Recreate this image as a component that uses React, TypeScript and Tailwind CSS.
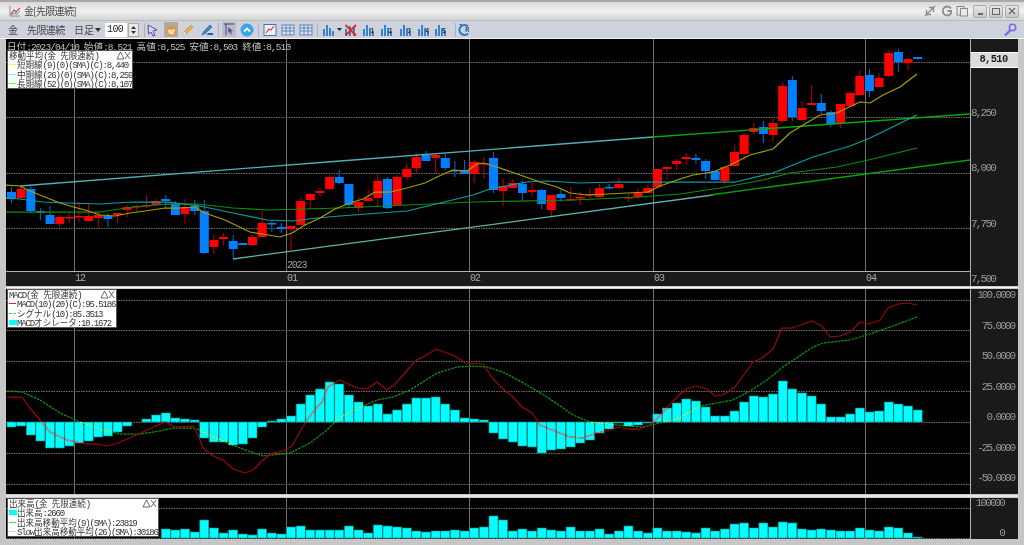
import React from "react";

type C = [number, number, number, number, 0 | 1];
// body top, body bottom, wick top, wick bottom, 0 = blue / 1 = red
const candles: C[] = [
  [192,199,187,203,0],[189,198,187,199,1],[189,211,186,213,0],[211,213,208,220,0],[215,224,206,224,0],[217,224,215,227,1],[217,218,213,223,1],[216,217,202,222,1],[216,221,203,221,1],[215,218,213,229,1],
  [216,219,213,227,0],[213,215,213,223,1],[207,210,205,217,1],[206,207,204,212,1],[205,206,195,208,1],[201,205,199,206,1],[199,201,195,208,0],[203,215,201,215,0],[207,214,199,224,1],[206,211,200,215,0],
  [211,253,200,254,0],[240,247,234,254,1],[237,239,233,245,1],[241,249,235,259,0],[243,245,243,245,0],[237,245,235,245,1],[223,237,211,237,1],[223,224,221,232,0],[227,229,223,233,0],[226,229,226,251,1],
  [201,225,198,225,1],[194,200,193,209,1],[191,193,187,197,1],[177,189,175,190,1],[177,183,170,184,0],[184,205,184,208,0],[202,208,197,212,1],[198,201,190,201,1],[181,198,173,207,1],[179,208,177,209,0],
  [177,205,175,205,1],[169,177,163,179,1],[157,168,153,174,1],[155,161,151,161,0],[155,158,153,173,1],[158,168,153,170,0],[170,171,161,177,0],[170,174,160,174,0],[162,174,160,183,1],[163,164,157,179,1],
  [158,190,152,193,0],[186,191,179,206,1],[183,188,179,189,1],[184,193,180,201,0],[190,192,183,196,1],[190,204,189,209,0],[195,210,195,216,1],[194,198,189,202,0],[199,200,187,200,1],[197,198,192,205,1],
  [194,195,188,199,1],[188,197,184,197,1],[187,188,184,189,0],[184,188,178,189,1],[197,198,194,202,1],[193,197,188,199,1],[188,193,185,193,1],[169,187,169,187,1],[167,169,165,180,1],[161,164,159,170,1],
  [157,159,153,165,1],[158,160,154,164,0],[161,171,159,179,0],[171,180,171,180,0],[167,181,166,185,1],[152,166,145,166,1],[135,154,133,160,1],[128,132,123,134,1],[127,134,121,143,0],[123,135,119,142,1],
  [86,121,82,123,1],[80,117,76,121,0],[108,120,101,121,1],[103,105,85,105,1],[103,111,94,114,0],[112,124,110,127,0],[104,123,104,128,1],[93,106,91,106,1],[76,95,70,95,1],[75,91,69,97,0],
  [78,87,73,87,1],[53,76,50,77,1],[52,62,49,72,0],[59,63,57,71,1],[57,59,57,60,0],
];
const hist = [-5,-4,-13,-19,-26,-26,-24,-21,-19,-15,-14,-10,-4,0,3,7,9,4,3,2,-16,-20,-20,-23,-22,-16,-5,1,3,6,18,27,33,40,38,27,20,16,18,8,12,18,24,24,25,18,12,4,3,2,-11,-17,-20,-24,-25,-31,-28,-27,-25,-21,-18,-11,-7,-1,-4,-3,-1,8,14,19,23,21,15,6,6,11,20,26,25,28,41,33,29,26,18,5,5,8,14,10,11,20,18,16,12];
const vol = [0,0,0,0,0,0,0,0,0,0,0,0,0,0,0,0,9,8,9,6,18,10,5,8,4,3,9,5,4,11,12,8,8,8,8,12,8,5,13,12,11,10,7,6,7,7,8,7,10,11,22,18,7,9,7,10,8,7,11,7,7,9,4,7,12,7,5,10,7,7,6,5,10,7,9,14,15,10,15,11,16,15,9,8,9,8,7,7,10,8,7,11,10,5,1];

const cx = (i: number) => 11.5 + 9.64 * i;

const yellow = "6,185 20,186 30,191 45,197 60,203 70,206 85,210 100,215 115,216 130,213 145,211 165,208 180,208 195,207 205,213 225,220 250,232 262,234 280,237 292,233 305,225 320,218 335,209 350,203 363,199 375,192 390,192 407,188 425,183 437,177 453,170 467,171 477,164 483,163 497,167 520,175 540,182 557,187 570,193 587,195 607,194 627,193 648,192 660,186 680,179 693,175 713,172 730,165 750,155 773,149 790,133 803,125 820,115 837,113 847,108 860,102 870,103 883,95 900,87 917,74";
const teal = "6,198 20,199 43,202 67,203 100,204 133,202 167,202 200,206 233,213 267,220 293,221 317,218 340,216 380,213 407,211 440,203 473,195 490,189 527,182 547,181 580,183 617,182 680,182 735,182 773,173 793,165 813,157 850,146 870,138 917,115";
const green = "6,212 67,212 100,212 133,207 167,204 197,204 233,208 267,210 340,208 407,205 473,202 573,200 640,197 680,194 720,188 763,180 790,173 837,167 877,158 917,148";
const macd = "7,397 22,397 30,408 40,420 50,432 67,440 87,444 97,444 107,446 118,443 132,437 147,430 165,422 175,427 193,426 198,435 203,448 213,456 223,460 233,469 245,473 253,470 263,460 273,453 283,451 292,446 302,428 312,413 322,402 328,387 340,380 350,385 358,388 367,389 377,382 387,390 395,384 405,373 415,361 425,356 436,349 455,356 465,363 483,364 493,379 502,388 513,397 522,407 532,413 540,425 557,432 570,437 583,438 597,433 610,430 618,427 628,429 640,429 652,424 665,410 680,394 687,389 696,386 707,389 715,396 723,395 735,387 753,362 762,358 773,349 782,328 792,328 812,321 822,326 830,337 840,336 850,332 860,322 868,324 880,320 888,308 898,304 908,303 917,305";
const signal = "7,391 22,392 40,400 60,413 80,422 100,429 120,434 140,434 160,431 173,428 195,428 213,437 240,448 263,456 290,453 310,443 327,430 340,417 363,406 377,400 393,397 410,390 437,373 457,367 473,366 487,367 503,372 527,385 547,397 573,415 590,422 607,424 627,426 643,427 660,423 680,418 700,406 733,400 750,391 767,380 783,367 813,347 823,343 850,340 870,334 893,326 917,317";

const vLines = [74, 286, 469, 653, 865];

const cjk = /([\u3000-\u30ff\u4e00-\u9fff\uff00-\uffef]+)/;

function T({ s, big }: { s: string; big?: boolean }) {
  return (
    <>
      {s.split(cjk).map((p, i) =>
        cjk.test(p) ? (
          <span key={i} className={big ? "font-['Noto_Sans_CJK_JP',sans-serif] text-[9.6px]" : "font-['Noto_Sans_CJK_JP',sans-serif] text-[8.54px]"}>{p}</span>
        ) : (
          <span key={i} className={big ? "font-['Liberation_Mono',monospace] text-[9.5px] tracking-[-0.9px]" : "font-['Liberation_Mono',monospace] text-[9px] tracking-[-1.13px]"}>{p}</span>
        )
      )}
    </>
  );
}

function LegendRow({ s, swatch }: { s: string; swatch?: React.ReactNode }) {
  return (
    <div className="flex h-[9.3px] items-center whitespace-nowrap leading-[9.3px] text-[#333]">
      <div className="flex w-[8px] shrink-0 items-center">{swatch}</div>
      <span className="whitespace-nowrap"><T s={s} /></span>
    </div>
  );
}

function Legend({ title, rows, className }: { title: string; rows: React.ReactNode; className: string }) {
  return (
    <div className={`absolute left-[1px] z-10 flex flex-col border border-[#555] bg-white pl-[1px] pr-[1px] ${className}`}>
      <div className="flex h-[9.3px] items-center justify-between leading-[9.3px] text-[#333]">
        <span className="whitespace-nowrap"><T s={title} /></span>
        <svg width="15" height="9" viewBox="0 0 15 9" fill="none" stroke="#444" strokeWidth="0.8" className="shrink-0">
          <path d="M1 8 L4.5 1 L8 8 Z" />
          <path d="M9 1 L14 8 M14 1 L9 8" />
        </svg>
      </div>
      {rows}
    </div>
  );
}

function Grid({ ys, top, bottom }: { ys: number[]; top: number; bottom: number }) {
  return (
    <g>
      {ys.map((y) => (
        <line key={y} x1="6" x2="970" y1={y + 0.5} y2={y + 0.5} stroke="#707070" strokeWidth="1" strokeDasharray="1.5 1" />
      ))}
      {vLines.map((x) => (
        <line key={x} x1={x + 0.5} x2={x + 0.5} y1={top} y2={bottom} stroke="#707070" strokeWidth="1" />
      ))}
    </g>
  );
}

const Line = ({ p, c, w = 1.25, dash, clip }: { p: string; c: string; w?: number; dash?: string; clip?: string }) => (
  <polyline points={p} fill="none" stroke={c} strokeWidth={w} strokeDasharray={dash} clipPath={clip} strokeLinejoin="round" />
);

function MainPlot() {
  return (
    <svg viewBox="6 39 964 232" className="block h-[232px] w-[964px] bg-black">
      <Grid ys={[62, 117, 173, 228]} top={39} bottom={271} />
      <text x="287" y="268" className="fill-[#a0a0a0] text-[10px] font-['Liberation_Mono',monospace] tracking-[-1.2px]">2023</text>
      {candles.map((c, i) => {
        const x = cx(i);
        const red = c[4] === 1;
        return (
          <g key={i}>
            <line x1={x} x2={x} y1={c[2]} y2={c[3]} stroke={red ? "#a80000" : "#0064c0"} strokeWidth="1.1" />
            <rect x={x - 4.5} y={c[0]} width="9" height={Math.max(c[1] - c[0], 1.5)} fill={red ? "#ff0000" : "#0080ff"} />
          </g>
        );
      })}
      <Line p="20,186 340,161 653,137" c="#50b0b0" w={1.3} />
      <Line p="653,137 970,114" c="#0aa80a" w={1.3} />
      <Line p="233,259 713,195" c="#60b0b0" w={1.3} />
      <Line p="710,195 970,160" c="#0aa00a" w={1.3} />
      <Line p={green} c="#0a900a" />
      <Line p={teal} c="#0aa0a0" />
      <Line p={yellow} c="#a89e00" />
    </svg>
  );
}

function MacdPlot() {
  const bars = hist.map((v, i) => (v === 0 ? null : { x: cx(i) - 4.5, y: v > 0 ? 422 - v : 422, h: Math.abs(v) }));
  return (
    <svg viewBox="6 289 964 205" className="block h-[205px] w-[964px] bg-black">
      <defs>
        <clipPath id="barClip">
          {bars.map((b, i) => b && <rect key={i} x={b.x} y={b.y} width="9" height={b.h} />)}
        </clipPath>
      </defs>
      <Grid ys={[300, 330, 361, 391, 422, 453, 484]} top={289} bottom={494} />
      {bars.map((b, i) => b && <rect key={i} x={b.x} y={b.y} width="9" height={b.h} fill="#00ffff" stroke="#008a8a" strokeWidth="0.6" />)}
      <Line p={signal} c="#0a9a0a" dash="2.5 1" />
      <Line p={macd} c="#980808" />
      <Line p={signal} c="#a8ffb0" dash="2.5 1" clip="url(#barClip)" />
      <Line p={macd} c="#c48c8c" clip="url(#barClip)" />
    </svg>
  );
}

function VolPlot() {
  return (
    <svg viewBox="6 498 964 41" className="block h-[41px] w-[964px] bg-black">
      <Grid ys={[508, 538]} top={498} bottom={539} />
      {vol.map((v, i) =>
        v === 0 ? null : <rect key={i} x={cx(i) - 4.5} y={538 - v} width="9" height={v} fill="#00ffff" stroke="#008a8a" strokeWidth="0.6" />
      )}
    </svg>
  );
}

const Sep = ({ ml }: { ml: string }) => <div className={`h-[14px] w-px shrink-0 bg-[#aab0bc] ${ml}`} />;

const Ic = ({ children, className = "" }: { children: React.ReactNode; className?: string }) => (
  <svg viewBox="0 0 14 14" width="14" height="14" className={`shrink-0 ${className}`}>{children}</svg>
);

const Bars = ({ n, ml }: { n?: string; ml: string }) => (
  <Ic className={ml}>
    <rect x="1" y="6" width="2" height="7" fill="#3a7fd0" />
    <rect x="4" y="2" width="2" height="11" fill="#3a7fd0" />
    <rect x="7" y="5" width="2" height="8" fill="#3a7fd0" />
    <rect x="10" y="8" width="2" height="5" fill="#3a7fd0" />
    {n && <text x="8.5" y="10" fontSize="6" fontWeight="700" fill="#234">{n}</text>}
  </Ic>
);

const GridIcon = ({ ml }: { ml: string }) => (
  <Ic className={ml}>
    <rect x="1" y="2" width="12" height="10" fill="#dde4f0" stroke="#4a70b0" strokeWidth="0.8" />
    <path d="M1 5h12M1 8h12M5 2v10M9 2v10" stroke="#4a70b0" strokeWidth="0.8" />
  </Ic>
);

function Toolbar() {
  return (
    <div className="flex h-[17px] shrink-0 items-center bg-[#cdd2dc] pl-[8px] pr-[7px] text-[#444] font-['Noto_Sans_CJK_JP',sans-serif] text-[10px] leading-none">
      <span className="w-[12px] shrink-0">金</span>
      <span className="ml-[7px] w-[38px] shrink-0 whitespace-nowrap tracking-[-0.6px]">先限連続</span>
      <span className="ml-[9px] w-[18px] shrink-0 whitespace-nowrap">日足</span>
      <svg width="6" height="4" viewBox="0 0 6 4" className="ml-[3px] shrink-0"><path d="M0 0h6L3 4z" fill="#333" /></svg>
      <div className="ml-[4px] flex h-[14px] w-[22px] shrink-0 items-center bg-white pl-[2px] font-['Liberation_Mono',monospace] text-[10px] tracking-[-0.6px] text-[#222]">100</div>
      <div className="ml-[1px] flex h-[14px] w-[11px] shrink-0 flex-col items-center justify-center gap-[2px] border border-[#aaa] bg-[#e8e8e8]">
        <svg width="5" height="3" viewBox="0 0 5 3"><path d="M0 3h5L2.5 0z" fill="#333" /></svg>
        <svg width="5" height="3" viewBox="0 0 5 3"><path d="M0 0h5L2.5 3z" fill="#333" /></svg>
      </div>
      <Sep ml="ml-[5px]" />
      <Ic>
        <path d="M3 2 L12 7 L8 8 L10 12.5 L8 13 L6 9 L3.5 11 Z" fill="#dcd8f4" stroke="#5a4aa8" strokeWidth="1" />
      </Ic>
      <div className="ml-[5px] flex h-[15px] w-[14px] shrink-0 items-center justify-center bg-[#b4a898]">
        <svg viewBox="0 0 12 14" width="12" height="14">
          <path d="M3 6V3.5M5 6V2.5M7 6V2.5M9 6.5V4 M2 7.5 L4 12 H9 L10.5 7 V5 H8 V6 H3 Z" fill="#f7d8b0" stroke="#e08a20" strokeWidth="1" />
        </svg>
      </div>
      <Ic className="ml-[3px]">
        <path d="M2 12 L3 9 L10 2 L12 4 L5 11 Z" fill="#f2b040" stroke="#c88a20" strokeWidth="0.7" />
        <path d="M2 12 L3 9 L5 11 Z" fill="#fff" />
      </Ic>
      <Ic className="ml-[5px]">
        <path d="M2 12 L4 8 L10 2 L12 4 L6 10 Z" fill="#4a86c8" stroke="#2a5a98" strokeWidth="0.7" />
        <path d="M6 12 H13 V10 H9 Z" fill="#2a5a98" />
      </Ic>
      <Sep ml="ml-[4px]" />
      <div className="ml-[3px] flex h-[15px] w-[14px] shrink-0 items-center justify-center bg-[#b8bcc6]">
        <svg viewBox="0 0 12 13" width="12" height="13">
          <path d="M1 1H11M3 1V12" stroke="#5a3a6a" strokeWidth="1" />
          <path d="M5 4 L10 8 L8 8.5 L9 11 L8 11.5 L7 9 L5.5 10 Z" fill="#5a4aa8" />
        </svg>
      </div>
      <Ic className="ml-[4px]">
        <circle cx="7" cy="7" r="6.5" fill="#3aa4e8" />
        <path d="M4 8.5 L7 5.5 L10 8.5" stroke="#fff" strokeWidth="1.8" fill="none" />
      </Ic>
      <Sep ml="ml-[4px]" />
      <Ic className="ml-[4px]">
        <rect x="1" y="1.5" width="12" height="11" fill="#eef2fa" stroke="#4a70b0" strokeWidth="1" />
        <path d="M3 10 L6 6 L8 7 L11 3" stroke="#d04030" strokeWidth="1.2" fill="none" />
      </Ic>
      <GridIcon ml="ml-[4px]" />
      <GridIcon ml="ml-[4px]" />
      <Sep ml="ml-[4px]" />
      <Bars ml="ml-[4px]" />
      <svg width="5" height="3" viewBox="0 0 5 3" className="ml-[1px] shrink-0"><path d="M0 0h5L2.5 3z" fill="#222" /></svg>
      <Ic className="ml-[2px]">
        <rect x="1" y="6" width="2" height="7" fill="#3a7fd0" />
        <rect x="5" y="3" width="2" height="10" fill="#3a7fd0" />
        <rect x="9" y="5" width="2" height="8" fill="#3a7fd0" />
        <path d="M1.5 2 L12 12.5 M12 2 L1.5 12.5" stroke="#e02828" strokeWidth="1.8" />
      </Ic>
      <Bars ml="ml-[4px]" n="1" />
      <Bars ml="ml-[4px]" n="2" />
      <Bars ml="ml-[5px]" n="3" />
      <Bars ml="ml-[4px]" n="4" />
      <Bars ml="ml-[3px]" n="5" />
      <Sep ml="ml-[7px]" />
      <Ic className="ml-[1px]">
        <path d="M11 3.5 A5 5 0 1 0 11 10.5" stroke="#2a7ac8" strokeWidth="2" fill="none" />
        <path d="M2 1 L5 1 L5 4 Z" fill="#2a7ac8" />
        <text x="8" y="9" fontSize="6.5" fontWeight="700" fill="#2a5a98">R</text>
      </Ic>
      <Ic className="ml-auto">
        <path d="M2 12.5 L7.5 7" stroke="#7a6ae8" strokeWidth="2.4" />
        <circle cx="9.5" cy="4.5" r="3.2" fill="none" stroke="#7a6ae8" strokeWidth="1.6" />
      </Ic>
    </div>
  );
}

const WinBtn = ({ children }: { children: React.ReactNode }) => (
  <div className="flex h-[13px] w-[14px] items-center justify-center rounded-[2px] border border-[#aaa] bg-gradient-to-b from-[#e8e8e8] to-[#c8c8c8]">{children}</div>
);

function TitleBar() {
  return (
    <div className="flex h-[21px] shrink-0 items-center border-t-2 border-t-[#a8a8a8] border-b border-b-[#bbb] bg-gradient-to-b from-[#d8d8d8] via-[#f0f0f0] to-[#d4d4d4] pl-[9px] pr-[5px]">
      <svg viewBox="0 0 12 12" width="12" height="12" className="shrink-0">
        <path d="M1 1V11H11" stroke="#888" fill="none" />
        <path d="M2 9 L5 5 L7 7 L11 3" stroke="#d84060" strokeWidth="1.2" fill="none" />
        <path d="M2 10 L5 8 L8 9 L11 6" stroke="#4a80d0" strokeWidth="1" fill="none" />
      </svg>
      <span className="ml-[3px] whitespace-nowrap font-['Noto_Sans_CJK_JP',sans-serif] text-[10px] leading-none tracking-[-0.7px] text-[#444]">金[先限連続]</span>
      <svg viewBox="0 0 12 12" width="12" height="12" className="ml-auto shrink-0" fill="none" stroke="#8a8a8a" strokeWidth="1.4">
        <path d="M4 8 L8 4 M5 2.5 L9.5 2.5 V7 M2.5 5 V9.5 H7 M1 11 L11 1" />
      </svg>
      <svg viewBox="0 0 12 12" width="12" height="12" className="ml-[5px] shrink-0" fill="none" stroke="#8a8a8a" strokeWidth="1.8">
        <path d="M10 3.5 A4.5 4.5 0 1 0 10 8.5 V6 H6.5" />
      </svg>
      <svg viewBox="0 0 12 12" width="12" height="12" className="ml-[3px] shrink-0" fill="#e8e8e8" stroke="#8a8a8a" strokeWidth="1">
        <rect x="1" y="1.5" width="7" height="8.5" />
        <rect x="4.5" y="3.5" width="7" height="7.5" />
      </svg>
      <div className="ml-[5px] flex gap-[2px]">
        <WinBtn><div className="mt-[5px] h-[2px] w-[5px] bg-[#666]" /></WinBtn>
        <WinBtn><div className="h-[7px] w-[8px] border border-[#666]" /></WinBtn>
        <WinBtn>
          <svg viewBox="0 0 8 8" width="8" height="8"><path d="M1 1 L7 7 M7 1 L1 7" stroke="#666" strokeWidth="1.2" /></svg>
        </WinBtn>
      </div>
    </div>
  );
}

const swatchLine = (c: string) => <div className={`h-px w-[7px] ${c}`} />;

export default function App() {
  return (
    <div className="flex h-[545px] w-[1024px] flex-col overflow-hidden bg-[#c6c6c6] blur-[0.4px]">
      <TitleBar />
      <Toolbar />
      <div className="h-px shrink-0 bg-[#f4f4f4]" />
      <div className="flex flex-1 flex-col pl-[6px] pr-[6px]">
        {/* price pane */}
        <div className="flex h-[247px] shrink-0">
          <div className="relative flex w-[964px] shrink-0 flex-col">
            <MainPlot />
            <div className="h-px shrink-0 bg-[#b0b0b0]" />
            <svg viewBox="6 272 964 14" className="block h-[14px] w-[964px] bg-[#1a1a1a]">
              {[["12", 74], ["01", 286], ["02", 469], ["03", 653], ["04", 865]].map(([t, x]) => (
                <text key={t} x={Number(x) + 1} y="281" className="fill-[#aaa] text-[10px] font-['Liberation_Mono',monospace] tracking-[-1px]">{t}</text>
              ))}
            </svg>
            <div className="absolute left-[1px] top-0 z-10 whitespace-nowrap leading-[11px] text-[#c0c0c0]">
              <T big s="日付:2023/04/10 始値:8,521 高値:8,525 安値:8,503 終値:8,510" />
            </div>
            <Legend
              className="top-[11px] w-[126px]"
              title="移動平均(金 先限連続)"
              rows={
                <>
                  <LegendRow s="短期線(9)(0)(SMA)(C):8,440" swatch={swatchLine("bg-[#ffff30]")} />
                  <LegendRow s="中期線(26)(0)(SMA)(C):8,259" swatch={swatchLine("bg-[#70f0ff]")} />
                  <LegendRow s="長期線(52)(0)(SMA)(C):8,107" swatch={swatchLine("bg-[#60f060]")} />
                </>
              }
            />
          </div>
          <div className="flex w-[48px] shrink-0 flex-col border-l border-l-[#b0b0b0] bg-[#1a1a1a]">
            <div className="h-[13px] shrink-0" />
            <div className="h-px shrink-0 bg-white" />
            <div className="flex h-[14px] shrink-0 items-center justify-center bg-[#dcdcdc] pr-[2px] font-['Liberation_Mono',monospace] text-[10.5px] font-bold tracking-[-0.7px] text-[#222]">8,510</div>
            <div className="h-px shrink-0 bg-white" />
            <div className="mt-[40px] flex flex-col gap-[45.3px] font-['Liberation_Mono',monospace] text-[11px] leading-[10px] tracking-[-1.8px] text-[#999]">
              <span>8,250</span>
              <span>8,000</span>
              <span>7,750</span>
              <span>7,500</span>
            </div>
          </div>
        </div>
        <div className="h-[3px] shrink-0 bg-gradient-to-b from-[#bbb] via-[#f4f4f4] to-[#bbb]" />
        {/* MACD pane */}
        <div className="flex h-[205px] shrink-0">
          <div className="relative w-[964px] shrink-0">
            <MacdPlot />
            <Legend
              className="top-0 w-[110px]"
              title="MACD(金 先限連続)"
              rows={
                <>
                  <LegendRow s="MACD(10)(20)(C):95.5186" swatch={swatchLine("bg-[#e02020]")} />
                  <LegendRow s="シグナル(10):85.3513" swatch={<div className="h-px w-[7px] border-t border-dashed border-[#30d030]" />} />
                  <LegendRow s="MACDオシレータ:10.1672" swatch={<div className="h-[5px] w-[8px] bg-[#00ffff]" />} />
                </>
              }
            />
          </div>
          <div className="flex w-[48px] shrink-0 flex-col items-end justify-between border-l border-l-[#b0b0b0] bg-[#1a1a1a] pb-[11px] pr-[4px] pt-[1px] font-['Liberation_Mono',monospace] text-[11px] leading-[10px] tracking-[-2px] text-[#999]">
            <span>100.0000</span>
            <span>75.0000</span>
            <span>50.0000</span>
            <span>25.0000</span>
            <span>0.0000</span>
            <span>-25.0000</span>
            <span>-50.0000</span>
          </div>
        </div>
        <div className="h-[4px] shrink-0 bg-gradient-to-b from-[#bbb] via-[#f4f4f4] to-[#bbb]" />
        {/* volume pane */}
        <div className="flex h-[41px] shrink-0">
          <div className="relative w-[964px] shrink-0">
            <VolPlot />
            <Legend
              className="top-0 w-[152px]"
              title="出来高(金 先限連続)"
              rows={
                <>
                  <LegendRow s="出来高:2660" swatch={<div className="h-[5px] w-[8px] bg-[#00ffff]" />} />
                  <LegendRow s="出来高移動平均(9)(SMA):23819" swatch={swatchLine("bg-[#40e040]")} />
                  <LegendRow s="Slow出来高移動平均(26)(SMA):30186" swatch={swatchLine("bg-[#ffb0f0]")} />
                </>
              }
            />
          </div>
          <div className="flex w-[48px] shrink-0 flex-col items-end justify-between border-l border-l-[#b0b0b0] bg-[#1a1a1a] pb-[1px] pr-[14px] font-['Liberation_Mono',monospace] text-[11px] leading-[10px] tracking-[-1.9px] text-[#999]">
            <span>100000</span>
            <span>0</span>
          </div>
        </div>
      </div>
    </div>
  );
}
